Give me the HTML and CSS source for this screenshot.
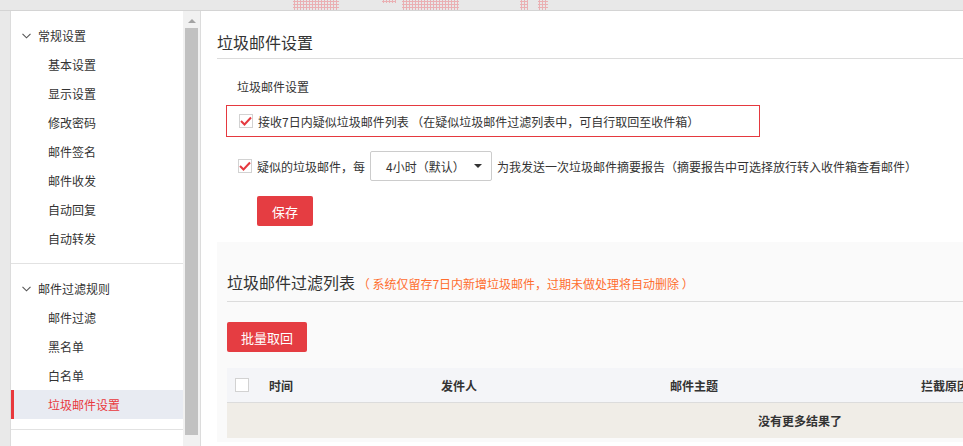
FILE: index.html
```html
<!DOCTYPE html>
<html>
<head>
	<meta charset="utf-8">
	<title>垃圾邮件设置</title>
	<link rel="stylesheet" href="styles.css">
</head>
<body>
<div class="topband">
	<span class="dots d1"></span>
	<span class="dots d2"></span>
	<span class="dots d3"></span>
	<span class="dots d4"></span>
	<span class="dots d5"></span>
</div>
<div class="frame">
	<div class="side">
		<div class="menu">
			<div class="group">
				<div class="group-title">
					<svg width="9" height="6" viewBox="0 0 9 6"><polyline points="0.5,0.8 4.5,4.8 8.5,0.8" fill="none" stroke="#555" stroke-width="1.1"/></svg>
					常规设置
				</div>
				<div class="item">基本设置</div>
				<div class="item">显示设置</div>
				<div class="item">修改密码</div>
				<div class="item">邮件签名</div>
				<div class="item">邮件收发</div>
				<div class="item">自动回复</div>
				<div class="item">自动转发</div>
			</div>
			<div class="group">
				<div class="group-title">
					<svg width="9" height="6" viewBox="0 0 9 6"><polyline points="0.5,0.8 4.5,4.8 8.5,0.8" fill="none" stroke="#555" stroke-width="1.1"/></svg>
					邮件过滤规则
				</div>
				<div class="item">邮件过滤</div>
				<div class="item">黑名单</div>
				<div class="item">白名单</div>
				<div class="item active">垃圾邮件设置</div>
			</div>
		</div>
		<div class="scrollbar">
			<div class="arrow"></div>
			<div class="thumb"></div>
		</div>
	</div>
	<div class="main">
		<h2 class="page-title">垃圾邮件设置</h2>
		<div class="settings">
			<div class="label">垃圾邮件设置</div>
			<div class="opt boxed">
				<span class="check"><svg width="12" height="10" viewBox="0 0 12 10"><polyline points="1,5 4.5,8.5 11,1.5" fill="none" stroke="#e5393f" stroke-width="2"/></svg></span>
				<span>接收7日内疑似垃圾邮件列表 （在疑似垃圾邮件过滤列表中，可自行取回至收件箱）</span>
			</div>
			<div class="opt">
				<span class="check"><svg width="12" height="10" viewBox="0 0 12 10"><polyline points="1,5 4.5,8.5 11,1.5" fill="none" stroke="#e5393f" stroke-width="2"/></svg></span>
				<span>疑似的垃圾邮件，每</span>
				<div class="select">4小时（默认）<span class="caret"></span></div>
				<span>为我发送一次垃圾邮件摘要报告（摘要报告中可选择放行转入收件箱查看邮件）</span>
			</div>
			<button class="btn save">保存</button>
		</div>
		<div class="list">
			<div class="list-head">
				<span class="list-title">垃圾邮件过滤列表</span>
				<span class="note">（ 系统仅留存7日内新增垃圾邮件，过期未做处理将自动删除 ）</span>
			</div>
			<button class="btn">批量取回</button>
			<div class="table">
				<div class="thead">
					<div class="cell"><span class="check empty"></span></div>
					<div class="cell">时间</div>
					<div class="cell">发件人</div>
					<div class="cell">邮件主题</div>
					<div class="cell">拦截原因</div>
				</div>
				<div class="empty-row">没有更多结果了</div>
			</div>
		</div>
	</div>
</div>
</body>
</html>
```

FILE: styles.css
```css
body{
	margin: 0;
	background: #e9e9e9;
	font-family: "Noto Sans CJK SC", "Noto Sans", sans-serif;
	font-size: 12px;
	color: #333;
	overflow: hidden;
	height: 446px;
}
.topband{
	position: relative;
	height: 10px;
	border-bottom: 1px solid #d4d4d4;
	background: #e8e8e8;
}
.dots{
	position: absolute;
	top: 0;
	height: 10px;
	background-image: radial-gradient(circle, #eab0b3 1px, transparent 1.4px);
	background-size: 3px 3px;
}
.d1{ left: 293px; width: 46px; }
.d2{ left: 382px; width: 14px; height: 3px; }
.d3{ left: 402px; width: 57px; }
.d4{ left: 520px; width: 8px; }
.d5{ left: 538px; width: 10px; }
.frame{
	display: flex;
	height: 435px;
	padding-left: 10px;
}
.side{
	display: flex;
	width: 189px;
	background: #fff;
	border-left: 1px solid #dcdcdc;
}
.menu{
	flex: 1;
}
.group{
	padding: 10px 0;
	border-bottom: 1px solid #e2e2e2;
}
.group-title{
	height: 29px;
	line-height: 29px;
	padding-left: 11px;
	display: flex;
	align-items: center;
	gap: 7px;
}
.item{
	height: 29px;
	line-height: 29px;
	padding-left: 37px;
}
.item.active{
	background: #e8ebf2;
	color: #e8383d;
	border-left: 3px solid #e8383d;
	padding-left: 34px;
}
.scrollbar{
	width: 17px;
	background: #f1f1f1;
	display: flex;
	flex-direction: column;
	align-items: center;
}
.arrow{
	margin-top: 8px;
	width: 0;
	height: 0;
	border-left: 4px solid transparent;
	border-right: 4px solid transparent;
	border-bottom: 4px solid #a3a3a3;
}
.thumb{
	margin-top: 5px;
	width: 13px;
	height: 407px;
	background: #c1c1c1;
}
.main{
	flex: 1;
	min-width: 0;
	background: #fff;
	border-left: 1px solid #dcdcdc;
	padding-left: 16px;
	overflow: hidden;
}
.page-title{
	margin: 0;
	padding: 21px 0 6px;
	font-size: 16px;
	font-weight: normal;
	line-height: 20px;
	border-bottom: 1px solid #dcdcdc;
}
.settings{
	padding-left: 9px;
	padding-bottom: 16px;
}
.label{
	margin-top: 18px;
	line-height: 20px;
	padding-left: 11px;
}
.opt{
	display: flex;
	align-items: center;
	height: 30px;
	padding-left: 12px;
	margin-top: 14px;
	white-space: nowrap;
}
.opt.boxed{
	margin-top: 8px;
	width: 520px;
	border: 1px solid #e5393f;
}
.check{
	display: inline-flex;
	align-items: center;
	justify-content: center;
	width: 12px;
	height: 12px;
	border: 1px solid #d2d2d2;
	background: #fff;
	margin-right: 5px;
}
.select{
	display: flex;
	align-items: center;
	box-sizing: border-box;
	width: 122px;
	height: 30px;
	margin: 0 5px;
	padding-left: 15px;
	border: 1px solid #ccc;
	border-radius: 2px;
}
.caret{
	margin-left: 9px;
	border-left: 4px solid transparent;
	border-right: 4px solid transparent;
	border-top: 4px solid #333;
}
.btn{
	display: block;
	height: 30px;
	padding: 0 16px;
	border: none;
	border-radius: 2px;
	background: #e53d42;
	color: #fff;
	font-family: inherit;
	font-size: 13px;
}
.save{
	margin: 15px 0 0 31px;
	width: 56px;
	padding: 0;
}
.list{
	background: #fafafa;
	padding: 0 0 0 10px;
	height: 200px;
}
.list-head{
	padding-top: 28px;
	padding-bottom: 5px;
	line-height: 24px;
	border-bottom: 1px solid #dcdcdc;
	white-space: nowrap;
}
.list-title{
	font-size: 16px;
}
.note{
	color: #ff6d2e;
	font-size: 12px;
}
.list .btn{
	margin-top: 20px;
	width: 80px;
	padding: 0;
}
.table{
	margin-top: 16px;
	width: 1146px;
}
.thead{
	display: grid;
	grid-template-columns: 42px 172px 229px 251px 1fr;
	height: 34px;
	align-items: center;
	background: #f4f5f8;
	border-bottom: 1px solid #dcdcdc;
	font-weight: bold;
}
.thead .cell:first-child{
	padding-left: 8px;
	display: flex;
}
.check.empty{
	margin: 0;
}
.empty-row{
	height: 35px;
	line-height: 35px;
	background: #f0ede7;
	text-align: center;
	font-weight: bold;
}
```
